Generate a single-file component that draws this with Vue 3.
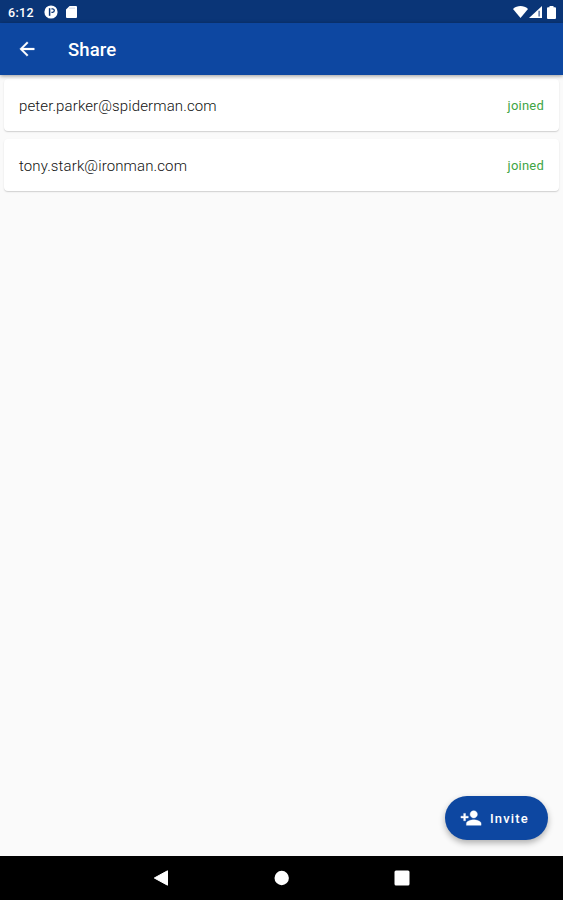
<template>
  <div class="screen">
    <div class="status-bar">
      <span class="clock">6:12</span>
      <svg class="app-icon" viewBox="0 0 14 14">
        <circle cx="7" cy="7" r="6.6" fill="#fff" />
        <path d="M5.600 3.200v7.600" stroke="#0a3577" stroke-width="1.500" />
        <path d="M7.400 3.900h1.200a1.700 1.700 0 0 1 0 3.400H7.400" fill="none" stroke="#0a3577" stroke-width="1.300" />
      </svg>
      <svg class="sd-icon" viewBox="0 0 11 12">
        <path d="M3.600 0H10a1 1 0 0 1 1 1v10a1 1 0 0 1-1 1H1a1 1 0 0 1-1-1V3.600z" fill="#fff" />
        <path d="M4 1.500v1.500M6 1.500v1.500M8 1.500v1.500" stroke="#b4c3dd" stroke-width="0.900" />
      </svg>
      <div class="system-icons">
        <svg width="15" height="12" viewBox="0 0 15 12">
          <path d="M0 2.900C4.300-.9 10.700-.9 15 2.900L7.500 12z" fill="#fff" />
        </svg>
        <svg width="13" height="12" viewBox="0 0 13 12">
          <path d="M13 0v12H0z" fill="#fff" />
          <path d="M9.300 4.800h1.700v5.700H9.300z" fill="#6d84ad" />
        </svg>
        <svg class="battery" width="9" height="13" viewBox="0 0 9 13">
          <path d="M2.500 0h4v1.300H8a1 1 0 0 1 1 1V12a1 1 0 0 1-1 1H1a1 1 0 0 1-1-1V2.300a1 1 0 0 1 1-1h1.500z" fill="#fff" />
        </svg>
      </div>
    </div>

    <header class="app-bar">
      <svg class="back" viewBox="0 0 24 24">
        <path d="M20 11H7.830l5.590-5.590L12 4l-8 8 8 8 1.410-1.410L7.830 13H20v-2z" fill="#fff" stroke="#fff" stroke-width="0.300" />
      </svg>
      <h1>Share</h1>
    </header>

    <main class="content">
      <div v-for="member in members" :key="member.email" class="card">
        <span class="email">{{ member.email }}</span>
        <span class="status">{{ member.status }}</span>
      </div>

      <button class="fab">
        <svg viewBox="0 0 24 24">
          <path
            d="M15 12c2.210 0 4-1.790 4-4s-1.790-4-4-4-4 1.790-4 4 1.790 4 4 4zm-9-2V7H4v3H1v2h3v3h2v-3h3v-2H6zm9 4c-2.670 0-8 1.340-8 4v2h16v-2c0-2.660-5.330-4-8-4z"
            fill="#fff"
            stroke="#fff"
            stroke-width="0.400"
          />
        </svg>
        <span>Invite</span>
      </button>
    </main>

    <nav class="nav-bar">
      <svg class="nav-back" viewBox="0 0 16 16"><path d="M14.500 .8v14.400L1.300 8z" fill="#fff" stroke="#fff" stroke-linejoin="round" /></svg>
      <svg viewBox="0 0 16 16"><circle cx="7.700" cy="8" r="7.200" fill="#fff" /></svg>
      <svg viewBox="0 0 16 16"><rect x="0.500" y="0.500" width="15" height="15" rx="1.500" fill="#fff" /></svg>
    </nav>
  </div>
</template>

<script setup>
const members = [
  { email: 'peter.parker@spiderman.com', status: 'joined' },
  { email: 'tony.stark@ironman.com', status: 'joined' }
]
</script>

<style>
body {
  margin: 0;
}
</style>

<style scoped>
.screen {
  display: flex;
  flex-direction: column;
  width: 563px;
  height: 900px;
  overflow: hidden;
  background: #fafafa;
  font-family: Roboto, "Liberation Sans", sans-serif;
}

.status-bar {
  display: flex;
  align-items: center;
  height: 23px;
  padding: 1px 7px 0 8px;
  box-sizing: border-box;
  background: #0a3577;
  color: #fff;
}

.clock {
  width: 36px;
  font-size: 12.500px;
  font-weight: 500;
  letter-spacing: 0.300px;
}

.app-icon {
  width: 14px;
  height: 14px;
}

.sd-icon {
  width: 11px;
  height: 12px;
  margin-left: 8px;
}

.system-icons {
  display: flex;
  align-items: center;
  margin-left: auto;
}

.system-icons svg + svg {
  margin-left: 1px;
}

.system-icons .battery {
  margin-left: 5px;
}

.app-bar {
  position: relative;
  z-index: 1;
  display: flex;
  align-items: center;
  height: 52px;
  padding-left: 16px;
  background: #0d47a1;
  box-shadow: 0 1px 4px rgba(0, 0, 0, 0.4);
  color: #fff;
}

.back {
  width: 22px;
  height: 22px;
}

h1 {
  margin: 0 0 0 30px;
  padding-top: 2px;
  font-size: 18.500px;
  font-weight: 500;
  letter-spacing: 0.100px;
}

.content {
  position: relative;
  flex: 1;
  padding: 4px;
}

.card {
  display: flex;
  align-items: center;
  justify-content: space-between;
  height: 52px;
  margin-bottom: 8px;
  padding: 0 15px;
  border-radius: 4px;
  background: #fff;
  box-shadow: 0 1px 1px rgba(0, 0, 0, 0.13), 0 1px 3px rgba(0, 0, 0, 0.05);
}

.email {
  padding-top: 1px;
  font-size: 15px;
  font-weight: 300;
  letter-spacing: 0.120px;
  color: #111;
}

.status {
  font-size: 13px;
  letter-spacing: 0.220px;
  color: #3fa544;
}

.fab {
  position: absolute;
  right: 15px;
  bottom: 16px;
  display: flex;
  align-items: center;
  width: 103px;
  height: 44px;
  padding: 0 0 0 15px;
  border: 0;
  border-radius: 22px;
  background: #0d47a1;
  box-shadow: 0 3px 6px rgba(0, 0, 0, 0.3);
  color: #fff;
  font-family: inherit;
  font-size: 13px;
  font-weight: 500;
  letter-spacing: 1.150px;
}

.fab svg {
  width: 22px;
  height: 22px;
  margin-right: 8px;
}

.nav-bar {
  display: flex;
  align-items: center;
  justify-content: center;
  gap: 104px;
  height: 44px;
  background: #000;
}

.nav-bar svg {
  width: 16px;
  height: 16px;
}

.nav-bar .nav-back {
  margin: 0 1px 0 -1px;
}
</style>
